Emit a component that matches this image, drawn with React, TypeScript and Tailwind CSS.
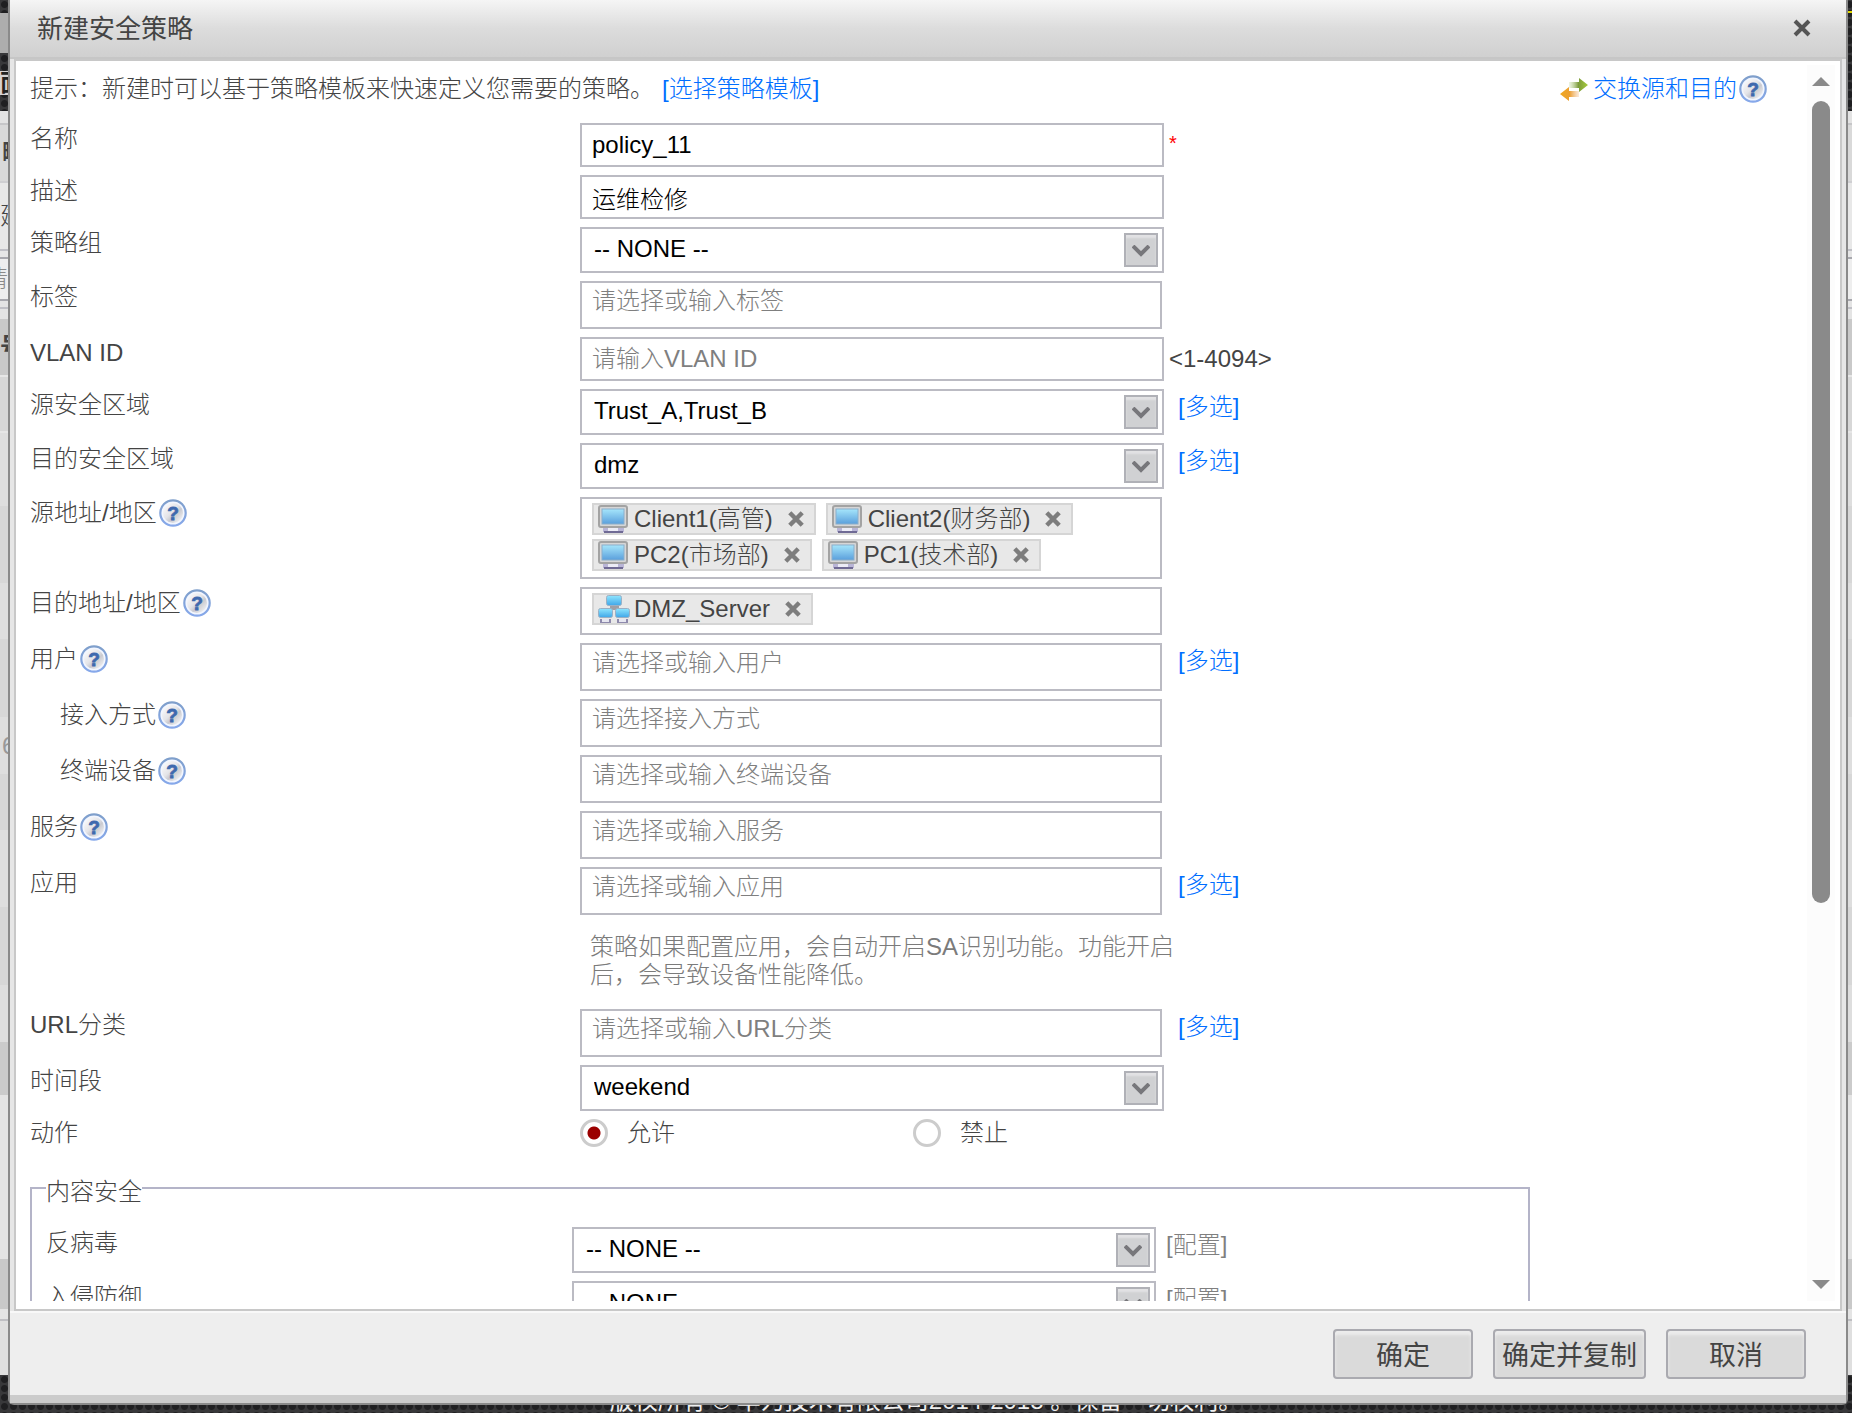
import React from 'react';

const strips = [
  { cls: 'h-3 bg-[#e3e3e3]' },
  { cls: 'h-0.5 bg-[#c6c6c8]' },
  { cls: 'h-14 bg-[#d9d9d9] pl-0.5 font-bold', text: '略' },
  { cls: 'h-0.5 bg-[#cfcfd2]' },
  { cls: 'h-[66px] bg-[#e8e8e8]', text: '建' },
  { cls: 'h-0.5 bg-[#c0c0c6]' },
  { cls: 'h-1.5 bg-[#e6e6e6]' },
  { cls: 'h-0.5 bg-[#a8a8ae]' },
  { cls: 'h-10 bg-[#eeeeee] -indent-4 text-[#8a8a8a]', text: '请' },
  { cls: 'h-0.5 bg-[#a8a8ae]' },
  { cls: 'h-1.5 bg-[#e4e4e4]' },
  { cls: 'h-0.5 bg-[#c0c0c6]' },
  { cls: 'h-2.5 bg-[#e4e4e4]' },
  { cls: 'h-14 bg-[#c9c9c9] font-bold', text: '号' },
  { cls: 'h-0.5 bg-[#e6e6e6]' },
  { cls: 'h-[54px] bg-[#d7d7d7]' },
  { cls: 'h-0.5 bg-[#e6e6e6]' },
  { cls: 'h-[73px] bg-[#dedede]' },
  { cls: 'h-[77px] bg-[#d7d7d7]' },
  { cls: 'h-14 bg-[#dedede]' },
  { cls: 'h-[78px] bg-[#d7d7d7]' },
  { cls: 'h-[57px] bg-[#dedede] pl-0.5 text-[#999999]', text: '6' },
  { cls: 'h-14 bg-[#d7d7d7]' },
  { cls: 'h-[77px] bg-[#dedede]' },
  { cls: 'h-[78px] bg-[#d7d7d7]' },
  { cls: 'h-[57px] bg-[#dedede]' },
  { cls: 'h-[53px] bg-[#cbcbcb]' },
  { cls: 'h-[164px] bg-[#e4e4e4]' },
  { cls: 'h-[50px] bg-[#c9c9c9]' },
  { cls: 'h-2.5 bg-[#e4e4e4]' },
  { cls: 'h-0.5 bg-[#bfbfc3]' },
  { cls: 'h-[54px] bg-[#dfdfdf]' },
];

const HelpIcon = () => (
  <svg className="ml-0.5 size-7 shrink-0" viewBox="0 0 28 28" aria-hidden="true">
    <defs>
      <linearGradient id="helpFill" x1="0" y1="0" x2="1" y2="1">
        <stop offset="0" stopColor="#ffffff" />
        <stop offset="0.45" stopColor="#e4e4e8" />
        <stop offset="0.6" stopColor="#c9cad0" />
        <stop offset="1" stopColor="#ffffff" />
      </linearGradient>
      <linearGradient id="helpRing" x1="0" y1="0" x2="0" y2="1">
        <stop offset="0" stopColor="#7f9fcb" />
        <stop offset="1" stopColor="#86a8ea" />
      </linearGradient>
    </defs>
    <circle cx="14" cy="14" r="12.7" fill="#f2f6ff" stroke="url(#helpRing)" strokeWidth="2.2" />
    <circle cx="14" cy="14" r="10" fill="url(#helpFill)" />
    <text x="14" y="21" textAnchor="middle" fontSize="19" fontWeight="700" fontFamily="Liberation Sans, sans-serif" fill="#3f69ae" stroke="#3f69ae" strokeWidth="0.8">?</text>
  </svg>
);

const SwapIcon = () => (
  <svg className="h-6 w-[30px]" viewBox="0 0 30 24" aria-hidden="true">
    <defs>
      <linearGradient id="swapGreen" x1="0" x2="1">
        <stop offset="0" stopColor="#c5dba0" stopOpacity="0.3" />
        <stop offset="0.5" stopColor="#7d9c3c" />
        <stop offset="1" stopColor="#a6cc3c" />
      </linearGradient>
      <linearGradient id="swapOrange" x1="0" x2="1">
        <stop offset="0" stopColor="#f0a820" />
        <stop offset="0.5" stopColor="#eca030" />
        <stop offset="1" stopColor="#f0b880" stopOpacity="0.3" />
      </linearGradient>
    </defs>
    <path d="M10 5h10V1l9 7-9 7v-4H10z" fill="url(#swapGreen)" />
    <path d="M20 14H10v-4L1 17l9 7v-4h10z" fill="url(#swapOrange)" />
  </svg>
);

const PcIcon = () => (
  <svg className="h-7 w-[30px] shrink-0" viewBox="0 0 30 28" aria-hidden="true">
    <defs>
      <linearGradient id="pcScreen" x1="0" y1="0" x2="0" y2="1">
        <stop offset="0" stopColor="#a6e6fb" />
        <stop offset="1" stopColor="#5a9fdc" />
      </linearGradient>
    </defs>
    <path d="M5 23h21v4H5z" fill="#b9b5d6" />
    <path d="M6 26h19v2H6z" fill="#6f6a94" />
    <path d="M10 23h10v3H10z" fill="#ececf6" />
    <rect x="1" y="1" width="28" height="21" rx="2" fill="#d6d6d6" stroke="#a3a3a3" strokeWidth="2" />
    <rect x="4" y="4" width="22" height="15" fill="url(#pcScreen)" stroke="#8aaecb" />
  </svg>
);

const GroupIcon = () => (
  <svg className="h-7 w-8 shrink-0" viewBox="0 0 32 28" aria-hidden="true">
    <defs>
      <linearGradient id="nodeScreen" x1="0" y1="0" x2="0" y2="1">
        <stop offset="0" stopColor="#8fe6ff" />
        <stop offset="1" stopColor="#3fa6e8" />
      </linearGradient>
    </defs>
    <path d="M12 10h9v3h-9zM7 13h19v2H7z" fill="#9f9fa5" />
    <rect x="8.500" y="0.500" width="15" height="10" rx="2" fill="url(#nodeScreen)" stroke="#9bb0c5" />
    <rect x="0.500" y="13.500" width="14" height="9" rx="2" fill="url(#nodeScreen)" stroke="#9bb0c5" />
    <rect x="17.500" y="13.500" width="14" height="9" rx="2" fill="url(#nodeScreen)" stroke="#9bb0c5" />
    <path d="M2 24h11v4H2zM19 24h11v4H19z" fill="#8e8aac" />
    <path d="M4 24h7v3H4zM21 24h7v3h-7z" fill="#e6e6f0" />
  </svg>
);

const Cross = ({ className }: { className: string }) => (
  <svg className={className} viewBox="0 0 18 18" fill="none" stroke="currentColor" aria-hidden="true">
    <path d="M2 2l14 14M16 2L2 16" />
  </svg>
);

type RowProps = {
  label: string;
  htmlFor?: string;
  help?: boolean;
  indent?: boolean;
  aside?: React.ReactNode;
  children: React.ReactNode;
};

const Row = ({ label, htmlFor, help, indent, aside, children }: RowProps) => (
  <div className="flex items-start">
    <div className={`flex w-[550px] shrink-0 items-center pt-0.5 ${indent ? 'pl-[30px]' : ''}`}>
      <label htmlFor={htmlFor} className="leading-7">{label}</label>
      {help && <HelpIcon />}
    </div>
    <div className="w-[584px] shrink-0">{children}</div>
    {aside}
  </div>
);

const MultiLink = () => (
  <a href="#multi" className="ml-3.5 pt-1 leading-7 text-[#006eff]">[多选]</a>
);

const TextField = ({ id, value, placeholder }: { id: string; value?: string; placeholder?: string }) => (
  <input
    id={id}
    type="text"
    defaultValue={value}
    placeholder={placeholder}
    className="block h-11 w-full border-2 border-[#bbbbc3] bg-white px-2.5 text-black outline-none placeholder:text-[#7f7f7f]"
  />
);

const SelectField = ({ id, value }: { id: string; value: string }) => (
  <div className="relative">
    <select id={id} className="block h-[46px] w-full appearance-none border-2 border-[#bbbbc3] bg-white pb-0.5 pl-3 text-black outline-none">
      <option>{value}</option>
    </select>
    <span className="pointer-events-none absolute top-1.5 right-1.5 flex size-[34px] items-center justify-center border-2 border-[#b0b1b7] bg-[#d0d1d3] shadow-[inset_0_3px_2px_#e2e2e4]">
      <svg className="mt-0.5 h-3 w-[18px]" viewBox="0 0 18 12" fill="none" stroke="#77777b" strokeWidth="4" aria-hidden="true">
        <path d="M1 1l8 8 8-8" />
      </svg>
    </span>
  </div>
);

type Token = { text: string; group?: boolean };

const TokenField = ({ id, placeholder, tokens = [] }: { id: string; placeholder?: string; tokens?: Token[] }) => (
  <div className="mr-0.5 flex min-h-12 flex-wrap content-start gap-x-2.5 gap-y-1 border-2 border-[#bbbbc3] bg-white px-2.5 pt-1 pb-1.5">
    {tokens.map((token) => (
      <span key={token.text} className="flex h-8 items-center border-2 border-[#d5d5d5] bg-[#e8e8e8] pr-2.5 pl-1">
        {token.group ? <GroupIcon /> : <PcIcon />}
        <span className={token.group ? 'ml-1 leading-7' : 'ml-1.5 leading-7'}>{token.text}</span>
        <button type="button" aria-label={`删除 ${token.text}`} className="ml-[15px] text-[#7d7d7d]">
          <Cross className="size-4 stroke-5" />
        </button>
      </span>
    ))}
    <input
      id={id}
      type="text"
      placeholder={placeholder}
      className={tokens.length ? 'h-8 w-4 bg-transparent outline-none' : 'h-7 w-full bg-transparent outline-none placeholder:text-[#7f7f7f]'}
    />
  </div>
);

const ConfigRow = ({ id, label }: { id: string; label: string }) => (
  <div className="flex items-start">
    <label htmlFor={id} className="w-[526px] shrink-0 pt-0.5 leading-7">{label}</label>
    <div className="w-[584px] shrink-0"><SelectField id={id} value="-- NONE --" /></div>
    <a href="#config" className="ml-2.5 pt-1 leading-7 text-[#7f7f7f]">[配置]</a>
  </div>
);

const radioCls =
  'size-7 appearance-none rounded-full border-[3px] border-[#cccccc] bg-white checked:bg-[radial-gradient(circle,#9b0000_6px,transparent_7px)]';

const buttonCls =
  'h-[50px] rounded-sm border-2 border-[#aaaab0] bg-[#dadada] pt-1 text-[27px] leading-9 font-normal whitespace-nowrap shadow-[inset_0_4px_3px_#ececec]';

export default function App() {
  return (
    <div className="relative h-screen overflow-hidden bg-[#2c2c2e] font-['Liberation_Sans','Noto_Sans_CJK_SC',sans-serif] text-2xl font-light text-[#444444]">
      {/* page behind the dialog */}
      <div className="absolute inset-0 flex flex-col" aria-hidden="true">
        <div className="flex h-[111px] justify-between bg-[radial-gradient(circle,#1f1f21_3px,#38383a_4px)] bg-size-[9px_9px]">
          <div className="w-2 overflow-hidden pt-[13px]">
            <div className="h-10 bg-[#adadad]" />
            <div className="mt-[18px] h-6 bg-[#d6d3d3] font-bold leading-6 text-[#222222]">面</div>
          </div>
          <div className="mt-[11px] h-0.5 w-1 bg-[#e0d800]" />
        </div>
        {strips.map((strip, i) => (
          <div key={i} className={`flex shrink-0 items-center overflow-hidden ${strip.cls}`}>
            {strip.text}
          </div>
        ))}
        <div className="flex flex-1 items-end justify-center overflow-hidden bg-[radial-gradient(circle,#1f1f21_3px,#38383a_4px)] bg-size-[9px_9px] leading-6 font-normal text-[#eeeeee]">
          版权所有 © 华为技术有限公司2014-2018 。保留一切权利。
        </div>
      </div>

      <section role="dialog" aria-label="新建安全策略" className="relative mr-1 ml-2 flex h-full flex-col pb-2">
        <div className="flex min-h-0 flex-1 flex-col rounded-b-md border-x-2 border-b-2 border-[#8a8a8a] bg-[#e6e6e6]">
          <header className="flex h-[59px] shrink-0 items-center justify-between border-b-2 border-[#c6c6c6] bg-linear-to-b from-[#f5f5f5] via-[#dcdcdc] to-[#d0d0d0] pr-[35px] pb-0.5 pl-[27px]">
            <h1 className="pt-1 text-[26px] font-normal">新建安全策略</h1>
            <button type="button" aria-label="关闭" className="text-[#555555]">
              <Cross className="size-[18px] stroke-4" />
            </button>
          </header>

          <div className="mx-1 flex min-h-0 flex-1 border-x-2 border-t-2 border-b-2 border-[#c8c8c8] bg-white pb-2">
            <form className="min-w-0 flex-1 overflow-hidden pl-3.5">
              <div className="flex h-[62px] items-start justify-between pt-3.5 pr-10 leading-7">
                <p>
                  提示：新建时可以基于策略模板来快速定义您需要的策略。
                  <a href="#template" className="ml-2 text-[#006eff]">[选择策略模板]</a>
                </p>
                <a href="#swap" className="flex items-center gap-1 text-[#006eff]">
                  <SwapIcon />
                  <span className="flex items-end">交换源和目的<HelpIcon /></span>
                </a>
              </div>

              <div className="flex flex-col gap-2">
                <Row label="名称" htmlFor="name" aside={<span className="ml-[5px] pt-1.5 text-xl leading-7 text-[#ff0000]">*</span>}>
                  <TextField id="name" value="policy_11" />
                </Row>
                <Row label="描述" htmlFor="desc">
                  <TextField id="desc" value="运维检修" />
                </Row>
                <Row label="策略组" htmlFor="group">
                  <SelectField id="group" value="-- NONE --" />
                </Row>
                <Row label="标签" htmlFor="tag">
                  <TokenField id="tag" placeholder="请选择或输入标签" />
                </Row>
                <Row label="VLAN ID" htmlFor="vlan" aside={<span className="ml-[5px] pt-2 leading-7">&lt;1-4094&gt;</span>}>
                  <TextField id="vlan" placeholder="请输入VLAN ID" />
                </Row>
                <Row label="源安全区域" htmlFor="srcZone" aside={<MultiLink />}>
                  <SelectField id="srcZone" value="Trust_A,Trust_B" />
                </Row>
                <Row label="目的安全区域" htmlFor="dstZone" aside={<MultiLink />}>
                  <SelectField id="dstZone" value="dmz" />
                </Row>
                <Row label="源地址/地区" htmlFor="srcAddr" help>
                  <TokenField
                    id="srcAddr"
                    tokens={[{ text: 'Client1(高管)' }, { text: 'Client2(财务部)' }, { text: 'PC2(市场部)' }, { text: 'PC1(技术部)' }]}
                  />
                </Row>
                <Row label="目的地址/地区" htmlFor="dstAddr" help>
                  <TokenField id="dstAddr" tokens={[{ text: 'DMZ_Server', group: true }]} />
                </Row>
                <Row label="用户" htmlFor="user" help aside={<MultiLink />}>
                  <TokenField id="user" placeholder="请选择或输入用户" />
                </Row>
                <Row label="接入方式" htmlFor="access" help indent>
                  <TokenField id="access" placeholder="请选择接入方式" />
                </Row>
                <Row label="终端设备" htmlFor="terminal" help indent>
                  <TokenField id="terminal" placeholder="请选择或输入终端设备" />
                </Row>
                <Row label="服务" htmlFor="service" help>
                  <TokenField id="service" placeholder="请选择或输入服务" />
                </Row>
                <Row label="应用" htmlFor="app" aside={<MultiLink />}>
                  <TokenField id="app" placeholder="请选择或输入应用" />
                </Row>
                <p className="ml-[560px] w-[600px] pt-2.5 pb-3 leading-7 text-[#7b7b7b]">
                  策略如果配置应用，会自动开启SA识别功能。功能开启后，会导致设备性能降低。
                </p>
                <Row label="URL分类" htmlFor="url" aside={<MultiLink />}>
                  <TokenField id="url" placeholder="请选择或输入URL分类" />
                </Row>
                <Row label="时间段" htmlFor="time">
                  <SelectField id="time" value="weekend" />
                </Row>
                <div className="flex items-start" role="radiogroup" aria-label="动作">
                  <span className="w-[550px] shrink-0 leading-7">动作</span>
                  <label className="flex w-[333px] items-center gap-[19px] leading-7">
                    <input type="radio" name="action" defaultChecked className={radioCls} />
                    允许
                  </label>
                  <label className="flex items-center gap-[19px] leading-7">
                    <input type="radio" name="action" className={radioCls} />
                    禁止
                  </label>
                </div>
              </div>

              <fieldset className="mt-[23px] w-[1500px] border-2 border-[#b4b4c8] px-3.5 pb-4">
                <legend className="h-9 pt-2 leading-7">内容安全</legend>
                <div className="flex flex-col gap-2 pt-[21px]">
                  <ConfigRow id="antivirus" label="反病毒" />
                  <ConfigRow id="ips" label="入侵防御" />
                </div>
              </fieldset>
            </form>

            {/* scrollbar */}
            <div className="mt-1 mr-[5px] flex w-7 shrink-0 flex-col items-center bg-[#fcfcfc] pt-3 pb-3">
              <svg className="h-[9px] w-[18px]" viewBox="0 0 18 9" fill="#8a8a8a" aria-hidden="true">
                <path d="M9 0l9 9H0z" />
              </svg>
              <div className="mt-[15px] w-[18px] flex-1">
                <div className="h-[68%] rounded-full bg-[#8a8a8a]" />
              </div>
              <svg className="h-[9px] w-[18px]" viewBox="0 0 18 9" fill="#8a8a8a" aria-hidden="true">
                <path d="M0 0h18L9 9z" />
              </svg>
            </div>
          </div>

          <footer className="flex h-[92px] shrink-0 items-start justify-end gap-5 border-t-2 border-b-8 border-t-[#f8f8f8] border-b-[#cbcbcb] bg-[#eeeeee] pt-4 pr-10">
            <button type="submit" className={`w-[140px] ${buttonCls}`}>确定</button>
            <button type="button" className={`w-[153px] ${buttonCls}`}>确定并复制</button>
            <button type="button" className={`w-[140px] ${buttonCls}`}>取消</button>
          </footer>
        </div>
      </section>
    </div>
  );
}
